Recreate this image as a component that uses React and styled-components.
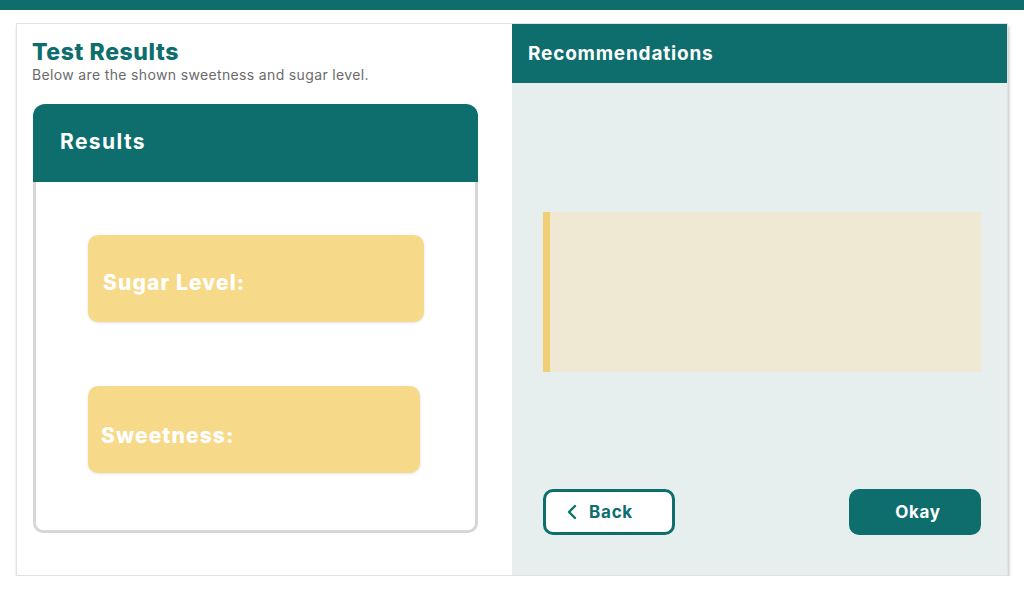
import styled, { createGlobalStyle } from 'styled-components'

const teal = '#0e6e6e'

const Global = createGlobalStyle`
body {
  margin : 0;
  background-color : #ffffff;
  font-family : Inter, "Open Sans", sans-serif;
}
`

const TopBar = styled.div`
height : 10px;
background-color : ${teal};
`

const Page = styled.div`
padding : 13px 16px 0 16px;
`

const Card = styled.div`
width : 992px;
height : 553px;
display : flex;
border : 1px solid #e2e2e2;
box-sizing : border-box;
box-shadow : 1px 3px 3px rgba(0,0,0,0.25);
`

const LeftPane = styled.div`
width : 495px;
background-color : #ffffff;
padding : 13px 0 0 15px;
box-sizing : border-box;
`

const Title = styled.h1`
margin : 0;
font-size : 23px;
line-height : 30px;
font-weight : 800;
letter-spacing : 0.6px;
color : ${teal};
`

const Subtitle = styled.div`
font-size : 14px;
letter-spacing : 0.35px;
color : #6b6b6b;
line-height : 16px;
`

const ResultsCard = styled.div`
margin-top : 21px;
margin-left : 1px;
width : 445px;
`

const ResultsHead = styled.div`
height : 78px;
background-color : ${teal};
border-radius : 12px 12px 0 0;
display : flex;
align-items : center;
padding-left : 27px;
padding-bottom : 4px;
box-sizing : border-box;
color : #ffffff;
font-size : 21px;
letter-spacing : 1.4px;
font-weight : 700;
`

const ResultsBody = styled.div`
height : 351px;
box-sizing : border-box;
border : 3px solid #d6d6d6;
border-top : none;
border-radius : 0 0 10px 10px;
padding : 53px 0 0 52px;
display : flex;
flex-direction : column;
gap : 64px;
`

const Stat = styled.div`
width : ${p => p.w}px;
height : 87px;
background-color : #f7d98a;
border-radius : 10px;
box-shadow : 0 1px 3px rgba(0,0,0,0.12);
display : flex;
align-items : center;
padding-left : ${p => p.pad}px;
padding-top : ${p => p.top}px;
box-sizing : border-box;
color : #ffffff;
font-size : 21px;
letter-spacing : 1.1px;
font-weight : 800;
`

const RightPane = styled.div`
flex : 1;
background-color : #e6eeee;
display : flex;
flex-direction : column;
`

const RightHead = styled.div`
height : 59px;
background-color : ${teal};
color : #ffffff;
font-size : 19px;
letter-spacing : 0.8px;
font-weight : 700;
display : flex;
align-items : center;
padding-left : 16px;
`

const Note = styled.div`
margin : 129px 26px 0 31px;
height : 160px;
background-color : #efe8d3;
border-left : 7px solid #f2cf75;
`

const Buttons = styled.div`
margin : 117px 26px 0 31px;
display : flex;
justify-content : space-between;
`

const Button = styled.button`
width : 132px;
height : 46px;
box-sizing : border-box;
border-radius : 10px;
border : 3px solid ${teal};
background-color : ${p => p.primary ? teal : '#ffffff'};
color : ${p => p.primary ? '#ffffff' : teal};
font-family : inherit;
font-size : 17px;
letter-spacing : 0.7px;
font-weight : 700;
display : flex;
align-items : center;
justify-content : center;
gap : 12px;
padding-right : ${p => p.primary ? 0 : 24}px;
cursor : pointer;
`

const App = () => {
  return (
    <>
      <Global />
      <TopBar />
      <Page>
        <Card>
          <LeftPane>
            <Title>Test Results</Title>
            <Subtitle>Below are the shown sweetness and sugar level.</Subtitle>
            <ResultsCard>
              <ResultsHead>Results</ResultsHead>
              <ResultsBody>
                <Stat w={336} pad={15} top={8}>Sugar Level:</Stat>
                <Stat w={332} pad={13} top={12}>Sweetness:</Stat>
              </ResultsBody>
            </ResultsCard>
          </LeftPane>
          <RightPane>
            <RightHead>Recommendations</RightHead>
            <Note />
            <Buttons>
              <Button>
                <svg width="10" height="16" viewBox="0 0 10 16" fill="none">
                  <path d="M8 2L2 8l6 6" stroke={teal} strokeWidth="2.4" strokeLinecap="round" strokeLinejoin="round" />
                </svg>
                Back
              </Button>
              <Button primary>Okay</Button>
            </Buttons>
          </RightPane>
        </Card>
      </Page>
    </>
  )
}

export default App
